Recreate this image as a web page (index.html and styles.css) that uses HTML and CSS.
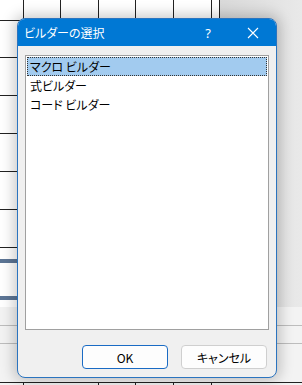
FILE: index.html
```html
<!DOCTYPE html>
<html lang="ja">
<head>
<meta charset="utf-8">
<title>ビルダーの選択</title>
<link rel="stylesheet" href="styles.css">
</head>
<body>
<div class="screen">
  <div class="sheet"></div>
  <div class="side"></div>
  <div class="lower"></div>
  <div class="dialog">
    <div class="titlebar">
      <span class="title">ビルダーの選択</span>
      <span class="help">?</span>
      <span class="close">
        <svg width="12" height="12" viewBox="0 0 12 12"><path d="M1 1 L11 11 M11 1 L1 11" stroke="#fff" stroke-width="1.1" fill="none"/></svg>
      </span>
    </div>
    <div class="body">
      <div class="list">
        <div class="item selected">マクロ ビルダー</div>
        <div class="item">式ビルダー</div>
        <div class="item">コード ビルダー</div>
      </div>
      <div class="buttons">
        <button class="btn default">OK</button>
        <button class="btn">キャンセル</button>
      </div>
    </div>
  </div>
</div>
</body>
</html>
```
FILE: styles.css
```css
html, body { margin: 0; padding: 0; }
body { font-family: "Noto Sans CJK JP", "Noto Sans", sans-serif; font-feature-settings: "palt"; }
.screen { position: relative; width: 302px; height: 385px; overflow: hidden; background: #fff; }

.sheet {
  position: absolute; left: 0; top: 0; width: 220px; height: 307px;
  background-color: #fff;
  background-image:
    linear-gradient(#222, #222), linear-gradient(#222, #222), linear-gradient(#222, #222),
    linear-gradient(#222, #222), linear-gradient(#222, #222), linear-gradient(#222, #222),
    linear-gradient(#222, #222),
    linear-gradient(#222, #222), linear-gradient(#222, #222), linear-gradient(#222, #222),
    linear-gradient(#222, #222), linear-gradient(#222, #222), linear-gradient(#222, #222),
    linear-gradient(#222, #222),
    linear-gradient(#5c7595, #5c7595), linear-gradient(#5c7595, #5c7595);
  background-repeat: no-repeat;
  background-size:
    1px 100%, 1px 100%, 1px 100%, 1px 100%, 1px 100%, 1px 100%, 1px 100%,
    100% 1px, 100% 1px, 100% 1px, 100% 1px, 100% 1px, 100% 1px, 100% 1px,
    100% 4px, 100% 4px;
  background-position:
    23px 0, 60px 0, 98px 0, 135px 0, 173px 0, 211px 0, 219px 0,
    0 20px, 0 57px, 0 95px, 0 133px, 0 171px, 0 209px, 0 247px,
    0 259px, 0 296px;
}
.side {
  position: absolute; left: 220px; top: 0; width: 82px; height: 307px;
  background: linear-gradient(90deg, #d9d9d9, #e9e9e9);
}
.lower {
  position: absolute; left: 0; top: 307px; width: 302px; height: 78px;
  background-color: #f3f3f3;
  background-image:
    linear-gradient(#bdbdbd, #bdbdbd), linear-gradient(#bdbdbd, #bdbdbd),
    linear-gradient(#222, #222),
    linear-gradient(#222, #222), linear-gradient(#222, #222), linear-gradient(#222, #222),
    linear-gradient(#222, #222), linear-gradient(#222, #222);
  background-repeat: no-repeat;
  background-size: 100% 1px, 100% 1px, 100% 1px, 1px 4px, 1px 4px, 1px 4px, 1px 4px, 1px 4px;
  background-position: 0 18px, 0 36px, 0 75px, 23px 75px, 98px 75px, 135px 75px, 173px 75px, 211px 75px;
}

.dialog {
  position: absolute; left: 17px; top: 18px; width: 258px; height: 358px;
  border: 1px solid #2b74bf; border-radius: 8px; overflow: hidden;
  background: #f0f0f0;
  box-shadow: 0 0 14px 3px rgba(0, 0, 0, 0.22);
  display: flex; flex-direction: column;
}
.titlebar {
  height: 30px; background: #0078d4; color: #fff;
  display: flex; align-items: center; font-size: 12px;
}
.title { padding-left: 6px; flex: 1; }
.help { width: 14px; margin-right: 32px; text-align: center; font-family: "Noto Sans", sans-serif; font-size: 13px; }
.close { width: 12px; height: 12px; margin-right: 17px; display: flex; }

.body { flex: 1; padding: 9px 7px 8px 7px; display: flex; flex-direction: column; }
.list {
  height: 271px; background: #fff; border: 1px solid #a0a0a0; padding: 1px;
  font-size: 12px; color: #000;
}
.item { height: 17px; line-height: 17px; padding-left: 2px; border: 1px solid transparent; }
.item.selected { background: #a2cbef; border: 1px dotted #333; }

.buttons { display: flex; justify-content: flex-end; gap: 13px; margin-top: 15px; padding-right: 2px; }
.btn {
  width: 86px; height: 24px; border: 1px solid #cfcfcf; border-radius: 4px;
  background: #fdfdfd; font-family: "Noto Sans CJK JP", "Noto Sans", sans-serif;
  font-feature-settings: "palt"; font-size: 12px; color: #000; padding: 0;
}
.btn.default { border-color: #1a6bc4; }
```
